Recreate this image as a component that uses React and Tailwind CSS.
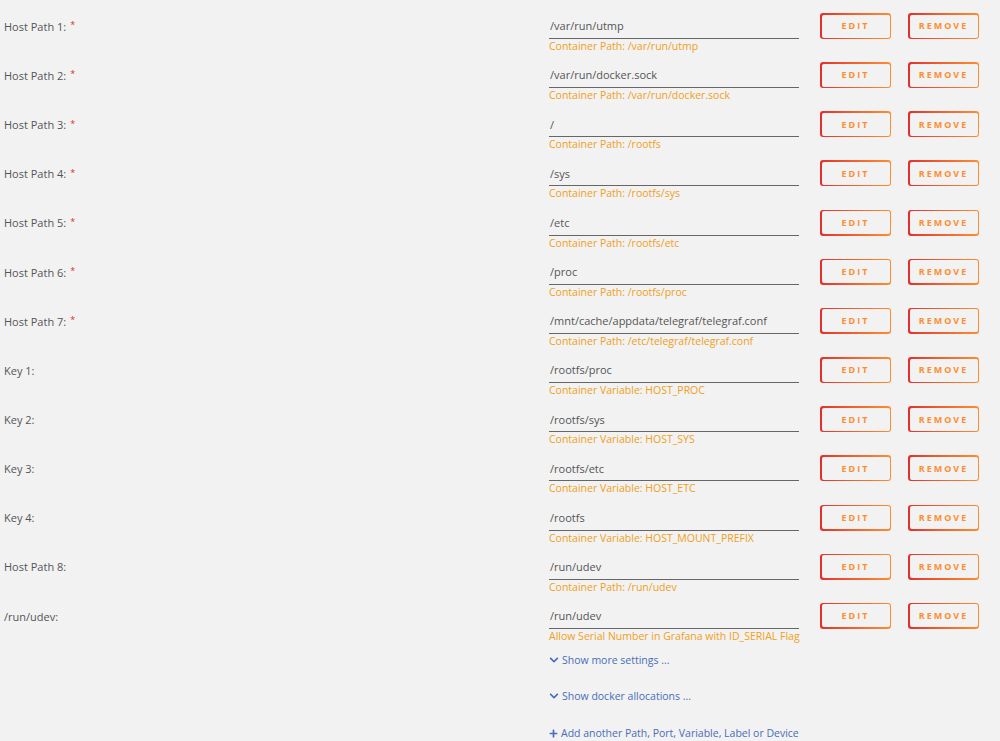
import { FaChevronDown, FaPlus } from 'react-icons/fa';

const rows = [
  { label: 'Host Path 1:', req: true, value: '/var/run/utmp', note: 'Container Path: /var/run/utmp' },
  { label: 'Host Path 2:', req: true, value: '/var/run/docker.sock', note: 'Container Path: /var/run/docker.sock' },
  { label: 'Host Path 3:', req: true, value: '/', note: 'Container Path: /rootfs' },
  { label: 'Host Path 4:', req: true, value: '/sys', note: 'Container Path: /rootfs/sys' },
  { label: 'Host Path 5:', req: true, value: '/etc', note: 'Container Path: /rootfs/etc' },
  { label: 'Host Path 6:', req: true, value: '/proc', note: 'Container Path: /rootfs/proc' },
  { label: 'Host Path 7:', req: true, value: '/mnt/cache/appdata/telegraf/telegraf.conf', note: 'Container Path: /etc/telegraf/telegraf.conf' },
  { label: 'Key 1:', value: '/rootfs/proc', note: 'Container Variable: HOST_PROC' },
  { label: 'Key 2:', value: '/rootfs/sys', note: 'Container Variable: HOST_SYS' },
  { label: 'Key 3:', value: '/rootfs/etc', note: 'Container Variable: HOST_ETC' },
  { label: 'Key 4:', value: '/rootfs', note: 'Container Variable: HOST_MOUNT_PREFIX' },
  { label: 'Host Path 8:', value: '/run/udev', note: 'Container Path: /run/udev' },
  { label: '/run/udev:', value: '/run/udev', note: 'Allow Serial Number in Grafana with ID_SERIAL Flag' },
];

function GradientButton({ children }) {
  return (
    <button className="h-[26px] w-[71px] rounded-[3px] bg-gradient-to-r from-[#e22d2d] to-[#ff8d30] p-[1.5px]">
      <span className="flex h-full w-full items-center justify-center rounded-[2px] bg-[#f2f2f2] text-[9px] font-bold tracking-[2px] text-[#ff8d30]">
        {children}
      </span>
    </button>
  );
}

function ConfigRow({ row }) {
  return (
    <div className="flex h-[49.17px] pt-[14px]">
      <div className="flex h-[26px] w-[549px] items-center pl-[4px] text-[11px] text-[#555]">
        {row.label}
        {row.req && <span className="ml-[4px] -translate-y-[2px] text-[9px] text-[#e22d2d]">*</span>}
      </div>
      <div className="-mt-px w-[250px]">
        <div className="flex h-[26px] items-center border-b border-[#666] pt-[2px] pl-px text-[11px] text-[#555]">{row.value}</div>
        <div className="mt-px whitespace-nowrap text-[10.5px] leading-[13px] text-[#f0a020]">{row.note}</div>
      </div>
      <div className="-mt-px ml-[21px] flex gap-[17px]">
        <GradientButton>EDIT</GradientButton>
        <GradientButton>REMOVE</GradientButton>
      </div>
    </div>
  );
}

export default function App() {
  return (
    <div className="h-[741px] overflow-hidden bg-[#f2f2f2]" style={{ fontFamily: '"Open Sans", "Noto Sans", sans-serif' }}>
      {rows.map((row) => (
        <ConfigRow key={row.label} row={row} />
      ))}
      <div className="ml-[549px] flex flex-col text-[10.5px] leading-[14px] text-[#486dba]">
        <div className="mt-[14px] flex items-center gap-[3px]">
          <FaChevronDown className="text-[10px]" />
          Show more settings ...
        </div>
        <div className="mt-[22px] flex items-center gap-[3px]">
          <FaChevronDown className="text-[10px]" />
          Show docker allocations ...
        </div>
        <div className="mt-[23px] flex items-center gap-[3px]">
          <FaPlus className="text-[9px]" />
          Add another Path, Port, Variable, Label or Device
        </div>
      </div>
    </div>
  );
}
